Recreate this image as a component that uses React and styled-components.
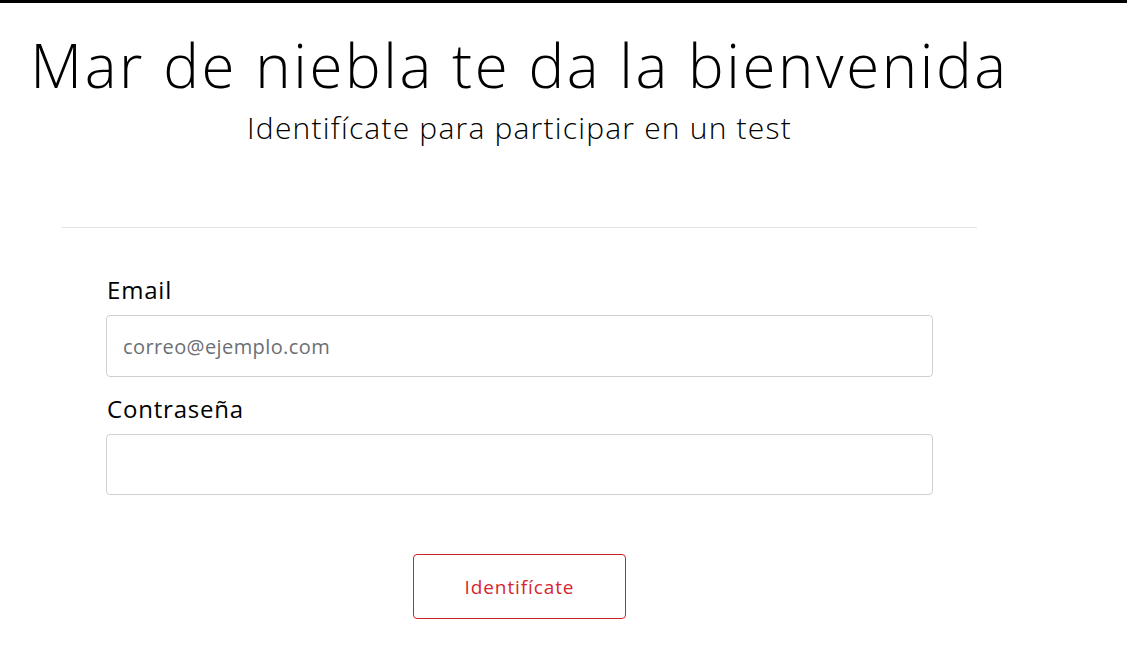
import React from "react"
import styled, { createGlobalStyle } from "styled-components"

const GlobalStyle = createGlobalStyle`
  html, body {
    margin: 0;
    padding: 0;
    background: #fff;
  }
  body {
    font-family: "Open Sans", "DejaVu Sans", sans-serif;
    color: #000;
  }
`

const TopBar = styled.div`
  height: 3px;
  background: #000;
`

const Main = styled.main`
  width: 1039px;
  display: flex;
  flex-direction: column;
  align-items: center;
`

const Title = styled.h1`
  margin: 32px 0 0;
  font-size: 60px;
  line-height: 60px;
  font-weight: 300;
  letter-spacing: 2.6px;
  white-space: nowrap;
`

const Subtitle = styled.h2`
  margin: 16px 0 0;
  font-size: 30px;
  line-height: 34px;
  font-weight: 300;
  letter-spacing: 1.2px;
  white-space: nowrap;
`

const Divider = styled.hr`
  width: 915px;
  margin: 82px 0 0;
  border: 0;
  border-top: 1px solid #e3e3e3;
`

const Form = styled.form`
  width: 827px;
  display: flex;
  flex-direction: column;
  margin-top: 47px;
`

const Field = styled.div`
  display: flex;
  flex-direction: column;
  margin-bottom: ${({ last }) => (last ? "0" : "17px")};
`

const Label = styled.label`
  font-size: 24px;
  line-height: 30px;
  letter-spacing: 0.8px;
  margin: 0 0 10px 1px;
`

const Input = styled.input`
  box-sizing: border-box;
  height: ${({ h }) => h || 62}px;
  width: 100%;
  padding: 0 16px;
  border: 1px solid #d0d0d0;
  border-radius: 4px;
  font-family: "Open Sans", "DejaVu Sans", sans-serif;
  font-size: 20px;
  letter-spacing: 0.4px;
  color: #333;
  outline: none;
  &::placeholder {
    color: #6c6f75;
  }
`

const Submit = styled.button`
  align-self: center;
  margin-top: 59px;
  width: 213px;
  height: 65px;
  background: #fff;
  border: 1px solid #c8232c;
  border-radius: 4px;
  color: #d6262f;
  font-family: "Open Sans", "DejaVu Sans", sans-serif;
  font-size: 19px;
  letter-spacing: 0.9px;
  cursor: pointer;
`

export default function App() {
  return (
    <>
      <GlobalStyle />
      <TopBar />
      <Main>
        <Title>Mar de niebla te da la bienvenida</Title>
        <Subtitle>Identifícate para participar en un test</Subtitle>
        <Divider />
        <Form onSubmit={(e) => e.preventDefault()}>
          <Field>
            <Label htmlFor="email">Email</Label>
            <Input id="email" type="email" placeholder="correo@ejemplo.com" />
          </Field>
          <Field last>
            <Label htmlFor="password">Contraseña</Label>
            <Input id="password" type="password" h={61} />
          </Field>
          <Submit type="submit">Identifícate</Submit>
        </Form>
      </Main>
    </>
  )
}
